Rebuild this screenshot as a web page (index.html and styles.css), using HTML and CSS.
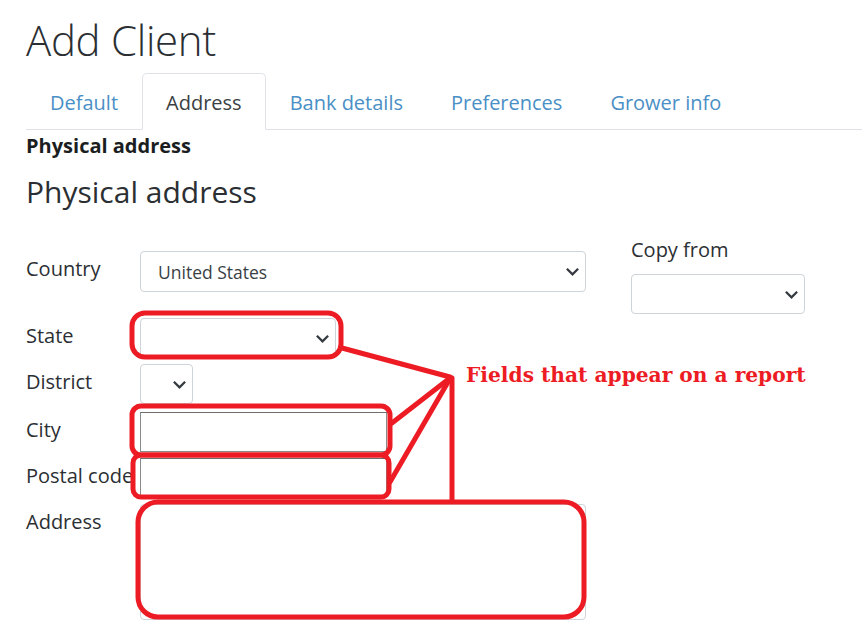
FILE: index.html
```html
<!DOCTYPE html>
<html lang="en">
<head>
<meta charset="utf-8">
<title>Add Client</title>
<link rel="stylesheet" href="styles.css">
</head>
<body>
<div class="page">
  <h1 class="title">Add Client</h1>
  <ul class="tabs">
    <li class="tab">Default</li>
    <li class="tab active">Address</li>
    <li class="tab">Bank details</li>
    <li class="tab">Preferences</li>
    <li class="tab">Grower info</li>
  </ul>
  <div class="section-label">Physical address</div>
  <h3 class="section-title">Physical address</h3>
  <div class="form-wrap">
    <div class="form">
      <div class="row row-country">
        <label class="lbl">Country</label>
        <div class="select wide tall"><span class="val">United States</span><svg class="chev" viewBox="0 0 16 16" width="15" height="15"><path d="M2 5l6 6 6-6" fill="none" stroke="#343a40" stroke-width="2.4"/></svg></div>
      </div>
      <div class="row">
        <label class="lbl">State</label>
        <div class="select state"><span class="val"></span><svg class="chev" viewBox="0 0 16 16" width="15" height="15"><path d="M2 5l6 6 6-6" fill="none" stroke="#343a40" stroke-width="2.4"/></svg></div>
      </div>
      <div class="row">
        <label class="lbl">District</label>
        <div class="select district"><span class="val"></span><svg class="chev" viewBox="0 0 16 16" width="15" height="15"><path d="M2 5l6 6 6-6" fill="none" stroke="#343a40" stroke-width="2.4"/></svg></div>
      </div>
      <div class="row row-city">
        <label class="lbl">City</label>
        <div class="input"></div>
      </div>
      <div class="row">
        <label class="lbl">Postal code</label>
        <div class="input"></div>
      </div>
      <div class="row">
        <label class="lbl">Address</label>
        <div class="textarea"></div>
      </div>
    </div>
    <div class="copy">
      <label class="copy-lbl">Copy from</label>
      <div class="select copy-sel"><span class="val"></span><svg class="chev" viewBox="0 0 16 16" width="15" height="15"><path d="M2 5l6 6 6-6" fill="none" stroke="#343a40" stroke-width="2.4"/></svg></div>
    </div>
  </div>
</div>
<div class="annot">
  <svg width="862" height="631" viewBox="0 0 862 631">
    <g fill="none" stroke="#ed1c24" stroke-width="5" stroke-linejoin="round" stroke-linecap="round">
      <rect x="132" y="313" width="209" height="44" rx="13"/>
      <rect x="132" y="406" width="258" height="49" rx="9"/>
      <rect x="133" y="455" width="256" height="42" rx="8"/>
      <rect x="138" y="502" width="446" height="115" rx="20"/>
      <path d="M342 348 L450 377"/>
      <path d="M392 423 L450 378"/>
      <path d="M390 482 L448 382"/>
      <path d="M452 378 L452 500"/>
    </g>
  </svg>
  <div class="note">Fields that appear on a report</div>
</div>
</body>
</html>
```
FILE: styles.css
```css
* { box-sizing: border-box; }
html, body { margin: 0; padding: 0; background: #fff; }
body {
  font-family: "Open Sans", "Noto Sans", sans-serif;
  color: #212529;
  width: 862px;
  height: 631px;
  overflow: hidden;
  position: relative;
}
.page { padding: 0 0 0 26px; }
.title {
  margin: 0;
  padding-top: 12px;
  font-size: 42px;
  font-weight: 300;
  line-height: 56px;
  letter-spacing: -0.3px;
  color: #2b2f33;
}
.tabs {
  list-style: none;
  margin: 5px 0 0 0;
  padding: 0;
  display: flex;
  border-bottom: 1px solid #dee2e6;
  height: 57px;
}
.tab {
  padding: 0 23px;
  font-size: 20px;
  line-height: 58px;
  color: #4a8fc6;
  border: 1px solid transparent;
  border-top-left-radius: 5px;
  border-top-right-radius: 5px;
  margin-bottom: -1px;
}
.tab.active {
  color: #3a3f44;
  border-color: #dee2e6 #dee2e6 #fff;
  background: #fff;
}
.section-label {
  font-weight: 700;
  font-size: 20px;
  line-height: 26px;
  margin-top: 3px;
  color: #1b1e21;
}
.section-title {
  margin: 12px 0 0 0;
  font-size: 30px;
  font-weight: 400;
  line-height: 42px;
  color: #2b2f33;
}
.form-wrap {
  display: flex;
  margin-top: 24px;
}
.form {
  width: 560px;
  padding-top: 14px;
  display: flex;
  flex-direction: column;
  gap: 6px;
}
.row { display: flex; align-items: flex-start; }
.row-country { margin-bottom: 20px; }
.row-city { margin-top: 2px; }
.lbl {
  width: 114px;
  flex: none;
  font-size: 20px;
  line-height: 26px;
  padding-top: 5px;
  color: #2b2f33;
  white-space: nowrap;
  overflow: visible;
}
.select {
  height: 40px;
  border: 1px solid #ced4da;
  border-radius: 4px;
  display: flex;
  align-items: center;
  justify-content: space-between;
  padding: 0 5px 0 17px;
  background: #fff;
}
.select.tall { height: 41px; }
.select.wide { width: 446px; }
.select.state { width: 196px; }
.select.district { width: 53px; padding-left: 0; }
.val { font-size: 17.5px; color: #3a3f44; }
.chev { flex: none; }
.input {
  width: 247px;
  height: 40px;
  border: 1px solid #8a8a8a;
  border-top-color: #6e6e6e;
  background: #fff;
  position: relative;
  z-index: 1;
}
.textarea {
  width: 446px;
  height: 116px;
  border: 1px solid #ced4da;
  border-radius: 4px;
}
.copy { margin-left: 45px; }
.copy-lbl {
  display: block;
  font-size: 20px;
  line-height: 26px;
  color: #2b2f33;
}
.copy-sel { width: 174px; margin-top: 11px; }
.annot {
  position: absolute;
  left: 0;
  top: 0;
  width: 862px;
  height: 631px;
  pointer-events: none;
  z-index: 2;
}
.annot svg { position: absolute; left: 0; top: 0; }
.note {
  position: absolute;
  left: 466px;
  top: 363px;
  font-family: "DejaVu Serif", "Liberation Serif", serif;
  font-weight: 700;
  font-size: 20.2px;
  color: #ed1c24;
  white-space: nowrap;
}
```
